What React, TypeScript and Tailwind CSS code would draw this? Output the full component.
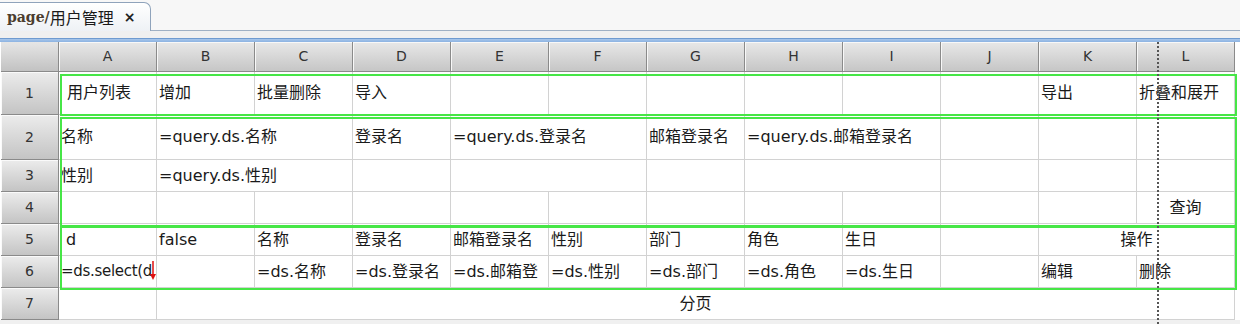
import React from "react";

type Cell = {
  text?: string;
  span?: number;
  align?: "left" | "center";
  pad?: string;
  mark?: boolean;
  tight?: boolean;
};

const cols = ["A", "B", "C", "D", "E", "F", "G", "H", "I", "J", "K", "L"];

const rows: { h: string; cells: Cell[] }[] = [
  {
    h: "h-[43px]",
    cells: [
      { text: "用户列表", pad: "pl-[8px]" },
      { text: "增加" },
      { text: "批量删除" },
      { text: "导入" },
      {}, {}, {}, {}, {}, {},
      { text: "导出" },
      { text: "折叠和展开" },
    ],
  },
  {
    h: "h-[45px]",
    cells: [
      { text: "名称" },
      { text: "=query.ds.名称", span: 2 },
      { text: "登录名" },
      { text: "=query.ds.登录名", span: 2 },
      { text: "邮箱登录名" },
      { text: "=query.ds.邮箱登录名", span: 2 },
      {}, {}, {},
    ],
  },
  {
    h: "h-[32px]",
    cells: [
      { text: "性别" },
      { text: "=query.ds.性别", span: 2 },
      {},
      { span: 2 },
      {},
      { span: 2 },
      {}, {}, {},
    ],
  },
  {
    h: "h-[32px]",
    cells: [{}, {}, {}, {}, {}, {}, {}, {}, {}, {}, {}, { text: "查询", align: "center" }],
  },
  {
    h: "h-[32px]",
    cells: [
      { text: "d", pad: "pl-[7px]" },
      { text: "false" },
      { text: "名称" },
      { text: "登录名" },
      { text: "邮箱登录名" },
      { text: "性别" },
      { text: "部门" },
      { text: "角色" },
      { text: "生日" },
      {},
      { text: "操作", span: 2, align: "center" },
    ],
  },
  {
    h: "h-[32px]",
    cells: [
      { text: "=ds.select(d", mark: true, tight: true },
      {},
      { text: "=ds.名称" },
      { text: "=ds.登录名" },
      { text: "=ds.邮箱登" },
      { text: "=ds.性别" },
      { text: "=ds.部门" },
      { text: "=ds.角色" },
      { text: "=ds.生日" },
      {},
      { text: "编辑" },
      { text: "删除" },
    ],
  },
  {
    h: "h-[32px]",
    cells: [{}, { text: "分页", span: 11, align: "center" }],
  },
];

const widthFor = (span = 1) =>
  span === 2 ? "w-[196px]" : span === 11 ? "w-[1078px]" : "w-[98px]";

function RowHead({ label, h }: { label: string; h: string }) {
  return (
    <div
      className={`${h} flex w-[58px] shrink-0 items-center justify-center border-b border-r border-[#8a8a8a] bg-gradient-to-b from-[#ececec] to-[#c4c4c4] text-[14px] text-[#333] shadow-[inset_1px_1px_0_#fafafa]`}
    >
      {label}
    </div>
  );
}

function GreenFrame({ top, height }: { top: string; height: string }) {
  return (
    <div
      className={`pointer-events-none absolute left-[60px] w-[1177px] border-2 border-[#46e646] ${top} ${height}`}
    />
  );
}

export default function App() {
  return (
    <div
      className="h-[324px] w-[1240px] overflow-hidden bg-[#f2f2f2] text-[#1a1a1a]"
      style={{ fontFamily: "'DejaVu Sans', 'Noto Sans CJK SC', sans-serif" }}
    >
      {/* tab strip */}
      <div className="flex h-[31px] items-end border-b border-[#9fb0c4] bg-[#f7f7f7]">
        <div className="-mb-px flex h-[29px] w-[151px] items-center rounded-tr-[7px] border border-b-0 border-l-0 border-[#8fa3bb] bg-gradient-to-b from-white to-[#eef1f5] pl-[7px]">
          <span
            className="text-[14px] font-bold text-[#4b3d2e]"
            style={{ fontFamily: "'DejaVu Serif', serif" }}
          >
            page/
          </span>
          <span
            className="text-[16px] leading-none"
            style={{ fontFamily: "'Noto Sans CJK SC', sans-serif" }}
          >
            用户管理
          </span>
          <span className="ml-[10px] text-[14px] font-bold leading-none text-[#222]">×</span>
        </div>
      </div>
      <div className="h-[7px] bg-[#f0f0f0]" />
      <div className="h-[4px] border-t border-[#6f9bd0] bg-gradient-to-b from-[#a8c6ea] to-[#8cb3e2]" />

      {/* sheet */}
      <div className="relative bg-white pl-px">
        {/* column header */}
        <div className="flex h-[30px]">
          <div className="w-[58px] shrink-0 border-b border-r border-[#8a8a8a] bg-gradient-to-b from-[#e6e6e6] to-[#c2c2c2]" />
          {cols.map((c) => (
            <div
              key={c}
              className="flex w-[98px] shrink-0 items-center justify-center border-b border-r border-[#8a8a8a] bg-gradient-to-b from-[#e8e8e8] to-[#c6c6c6] text-[14px] text-[#333] shadow-[inset_1px_1px_0_#f8f8f8]"
            >
              {c}
            </div>
          ))}
        </div>

        {rows.map((r, i) => (
          <div key={i} className="flex">
            <RowHead label={String(i + 1)} h={r.h} />
            {r.cells.map((c, j) => (
              <div
                key={j}
                className={`${r.h} ${widthFor(c.span)} relative flex shrink-0 items-center overflow-hidden whitespace-nowrap border-b border-r border-[#d2d2d2] ${
                  c.tight ? "text-[15px] tracking-[-0.3px]" : "text-[16px]"
                } ${c.align === "center" ? "justify-center" : c.pad ?? "pl-[2px]"}`}
              >
                {c.text}
                {c.mark && (
                  <svg className="absolute left-[90px] top-[5px]" width="8" height="20" viewBox="0 0 8 20">
                    <line x1="4" y1="0" x2="4" y2="15" stroke="#e01010" strokeWidth="1.5" />
                    <path d="M1 13 L4 19 L7 13 Z" fill="#e01010" />
                  </svg>
                )}
              </div>
            ))}
          </div>
        ))}

        <GreenFrame top="top-[32px]" height="h-[42px]" />
        <GreenFrame top="top-[75px]" height="h-[110px]" />
        <GreenFrame top="top-[184px]" height="h-[64px]" />

        {/* page break line */}
        <div className="pointer-events-none absolute left-[1157px] top-0 h-[290px] border-l-2 border-dotted border-[#555]" />
      </div>
      <div className="h-[10px] bg-[#f0f0f0]" />
    </div>
  );
}
